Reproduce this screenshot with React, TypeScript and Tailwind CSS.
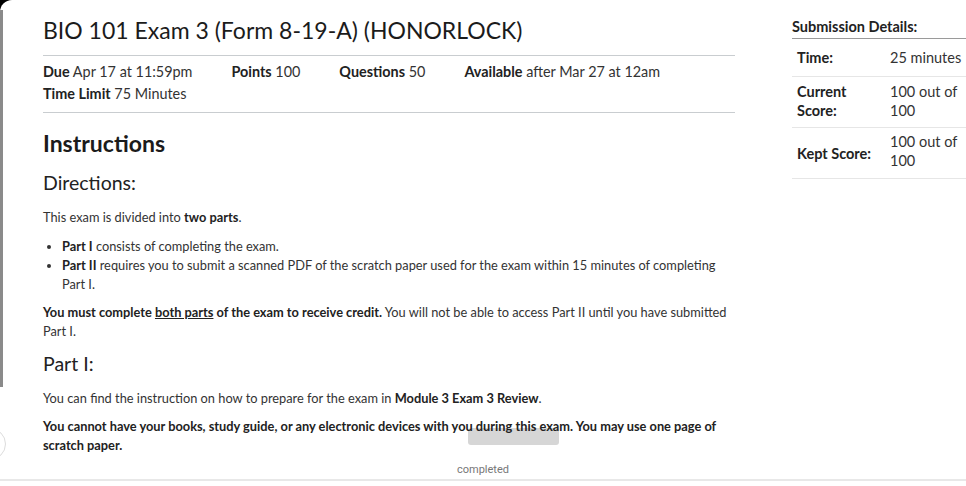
export default function App() {
  return (
    <div className="w-[966px] h-[486px] bg-black overflow-hidden">
      <div className="relative w-full h-full bg-white rounded-tl-[12px] overflow-hidden font-['Lato','Liberation_Sans',sans-serif] text-[#333]">
        {/* left frame edge */}
        <div className="absolute left-0 top-[10px] h-[377px] w-[3px] bg-[#8a8a8a]" />
        <div className="absolute left-[-26px] top-[428px] w-[32px] h-[32px] rounded-full border border-[#dcdcdc]" />

        <div className="flex">
          <main className="w-[735px] pl-[43px] pt-[16px]">
            <h1 className="text-[23px] leading-[29px] text-[#1b1b1b]">
              BIO 101 Exam 3 (Form 8-19-A) (HONORLOCK)
            </h1>
            <div className="mt-[10px] border-t border-[#c9cdd0] pt-[5px] pb-[7px] border-b">
              <ul className="flex flex-wrap gap-x-[39px] text-[14.4px] leading-[22px]">
                <li>
                  <span className="font-bold text-[#222]">Due</span> Apr 17 at 11:59pm
                </li>
                <li>
                  <span className="font-bold text-[#222]">Points</span> 100
                </li>
                <li>
                  <span className="font-bold text-[#222]">Questions</span> 50
                </li>
                <li>
                  <span className="font-bold text-[#222]">Available</span> after Mar 27 at 12am
                </li>
                <li>
                  <span className="font-bold text-[#222]">Time Limit</span> 75 Minutes
                </li>
              </ul>
            </div>

            <h2 className="mt-[16px] text-[23px] leading-[28px] font-bold text-[#1b1b1b]">Instructions</h2>
            <h3 className="mt-[14px] text-[19.5px] leading-[24px] text-[#222]">Directions:</h3>

            <div className="text-[12.8px] leading-[19px]">
              <p className="mt-[13px]">
                This exam is divided into <strong className="text-[#222]">two parts</strong>.
              </p>
              <ul className="mt-[10px] pl-[19px] list-disc marker:text-[#333]">
                <li>
                  <strong className="text-[#222]">Part I</strong> consists of completing the exam.
                </li>
                <li>
                  <strong className="text-[#222]">Part II</strong> requires you to submit a scanned PDF of the
                  scratch paper used for the exam within 15 minutes of completing Part I.
                </li>
              </ul>
              <p className="mt-[9px]">
                <strong className="text-[#222]">
                  You must complete <span className="underline">both parts</span> of the exam to receive credit.
                </strong>{" "}
                You will not be able to access Part II until you have submitted Part I.
              </p>
            </div>

            <h3 className="mt-[11px] text-[19.5px] leading-[24px] text-[#222]">Part I:</h3>

            <div className="text-[12.8px] leading-[19px]">
              <p className="mt-[13px]">
                You can find the instruction on how to prepare for the exam in{" "}
                <strong className="text-[#222]">Module 3 Exam 3 Review</strong>.
              </p>
              <div className="relative mt-[9px]">
                <div className="absolute left-[425px] top-[11px] w-[91px] h-[17px] rounded-[3px] bg-[#d6d6d6]" />
                <p className="relative font-bold text-[#222]">
                  You cannot have your books, study guide, or any electronic devices with you during this exam. You
                  may use one page of scratch paper.
                </p>
              </div>
            </div>
          </main>

          <aside className="ml-[57px] flex-1 pt-[17px] text-[14.5px] leading-[19px]">
            <h4 className="font-bold text-[#222] pb-[2px] border-b border-[#9a9a9a]">Submission Details:</h4>
            <div className="grid grid-cols-[98px_1fr] border-b border-[#e6e6e6]">
              <div className="pl-[5px] py-[9px] font-bold text-[#222]">Time:</div>
              <div className="py-[9px]">25 minutes</div>
            </div>
            <div className="grid grid-cols-[98px_1fr] border-b border-[#e6e6e6]">
              <div className="pl-[5px] pr-[10px] pt-[5px] pb-[7px] font-bold text-[#222]">Current Score:</div>
              <div className="pt-[5px] pb-[7px] pr-[4px]">100 out of 100</div>
            </div>
            <div className="grid grid-cols-[98px_1fr] items-center border-b border-[#e6e6e6]">
              <div className="pl-[5px] font-bold text-[#222]">Kept Score:</div>
              <div className="pt-[4px] pb-[8px] pr-[4px]">100 out of 100</div>
            </div>
          </aside>
        </div>

        {/* status caption */}
        <div className="absolute left-0 right-0 top-[463px] h-[18px] border-b-2 border-[#e8e8e8] text-center font-['Roboto',sans-serif] text-[11px] leading-[14px] text-[#777]">
          completed
        </div>
      </div>
    </div>
  );
}
